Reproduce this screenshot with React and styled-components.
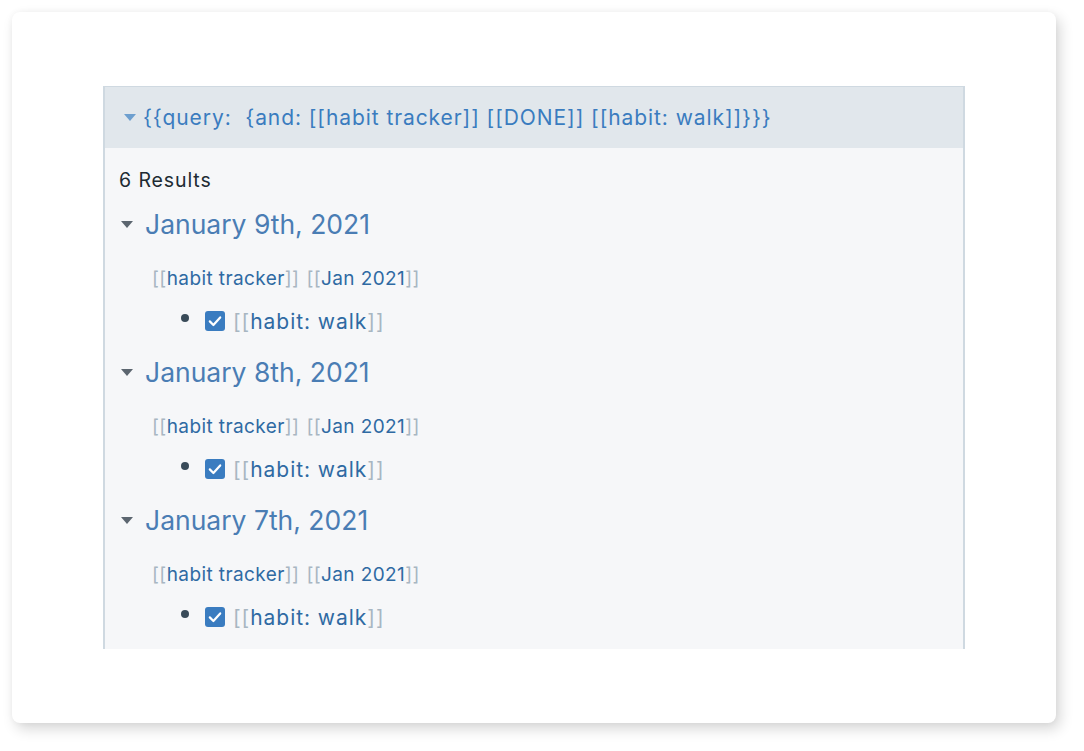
import React from "react";
import styled, { createGlobalStyle } from "styled-components";

const GlobalStyle = createGlobalStyle`
  html, body {
    margin: 0;
    padding: 0;
    background: #ffffff;
    font-family: Inter, "Noto Sans", sans-serif;
  }
`;

const days = ["January 9th, 2021", "January 8th, 2021", "January 7th, 2021"];

export default function App() {
  return (
    <>
      <GlobalStyle />
      <Page>
        <Card>
          <Panel>
            <QueryHeader>
              <Caret $color="#6d9fcf" />
              <QueryText>
                {"{{query:  {and: [[habit tracker]] [[DONE]] [[habit: walk]]}}}"}
              </QueryText>
            </QueryHeader>
            <Body>
              <Count>6 Results</Count>
              {days.map((day) => (
                <Group key={day}>
                  <DayTitle>
                    <Caret $color="#5c6670" />
                    <span>{day}</span>
                  </DayTitle>
                  <Crumbs>
                    <PageRef name="habit tracker" />
                    <PageRef name="Jan 2021" />
                  </Crumbs>
                  <Item>
                    <Bullet />
                    <Check>
                      <svg width="20" height="20" viewBox="0 0 20 20">
                        <path
                          d="M4.8 10.4 L8.4 14 L15.2 6.4"
                          fill="none"
                          stroke="#fff"
                          strokeWidth="2.2"
                          strokeLinecap="round"
                          strokeLinejoin="round"
                        />
                      </svg>
                    </Check>
                    <ItemRef>
                      <Bracket>[[</Bracket>
                      <span>habit: walk</span>
                      <Bracket>]]</Bracket>
                    </ItemRef>
                  </Item>
                </Group>
              ))}
            </Body>
          </Panel>
        </Card>
      </Page>
    </>
  );
}

function PageRef({ name }) {
  return (
    <span>
      <Bracket>[[</Bracket>
      <span>{name}</span>
      <Bracket>]]</Bracket>
    </span>
  );
}

const Page = styled.div`
  width: 1084px;
  height: 751px;
  padding: 12px 28px 28px 12px;
  box-sizing: border-box;
`;

const Card = styled.div`
  background: #fff;
  border-radius: 8px;
  box-shadow: 4px 6px 14px rgba(0, 0, 0, 0.16), 0 0 6px rgba(0, 0, 0, 0.04);
  padding: 74px 91px 75px 91px;
  height: 711px;
  box-sizing: border-box;
`;

const Panel = styled.div`
  height: 100%;
  overflow: hidden;
  border-top: 1px solid #cfd9e1;
  border-left: 2px solid #cfd9e1;
  border-right: 2px solid #cfd9e1;
  background: #f6f7f9;
`;

const QueryHeader = styled.div`
  height: 61px;
  background: #e1e7ec;
  display: flex;
  align-items: center;
  padding-left: 19px;
  gap: 7px;
`;

const Caret = styled.span`
  width: 0;
  height: 0;
  border-left: 6px solid transparent;
  border-right: 6px solid transparent;
  border-top: 7px solid ${(p) => p.$color};
`;

const QueryText = styled.span`
  font-size: 21px;
  color: #3a7cbf;
  letter-spacing: 0.92px;
  white-space: pre;
`;

const Body = styled.div`
  padding: 20px 0 0 14px;
`;

const Count = styled.div`
  font-size: 19.5px;
  letter-spacing: 0.9px;
  color: #202b33;
  line-height: 24px;
`;

const Group = styled.div`
  display: flex;
  flex-direction: column;
  margin-top: 10px;
`;

const DayTitle = styled.div`
  display: flex;
  align-items: center;
  gap: 12px;
  padding-left: 2px;
  height: 44px;
  font-size: 26.5px;
  letter-spacing: 0;
  color: #4a7db4;
`;

const Crumbs = styled.div`
  display: flex;
  gap: 7px;
  padding-left: 33px;
  margin-top: 18px;
  height: 28px;
  align-items: center;
  font-size: 19px;
  letter-spacing: 0.4px;
  color: #2f6aa3;
`;

const Bracket = styled.span`
  color: #a8b6c2;
`;

const Item = styled.div`
  display: flex;
  align-items: center;
  padding-left: 62px;
  margin-top: 14px;
  margin-bottom: 4px;
  height: 30px;
`;

const Bullet = styled.span`
  width: 8px;
  height: 8px;
  border-radius: 50%;
  background: #394b59;
  margin-top: -6px;
  margin-right: 16px;
`;

const Check = styled.span`
  width: 20px;
  height: 20px;
  border-radius: 3px;
  background: #3a7cc0;
  display: flex;
  align-items: center;
  justify-content: center;
  margin-right: 8px;
`;

const ItemRef = styled.span`
  font-size: 21px;
  letter-spacing: 0.95px;
  color: #2f6aa3;
`;
